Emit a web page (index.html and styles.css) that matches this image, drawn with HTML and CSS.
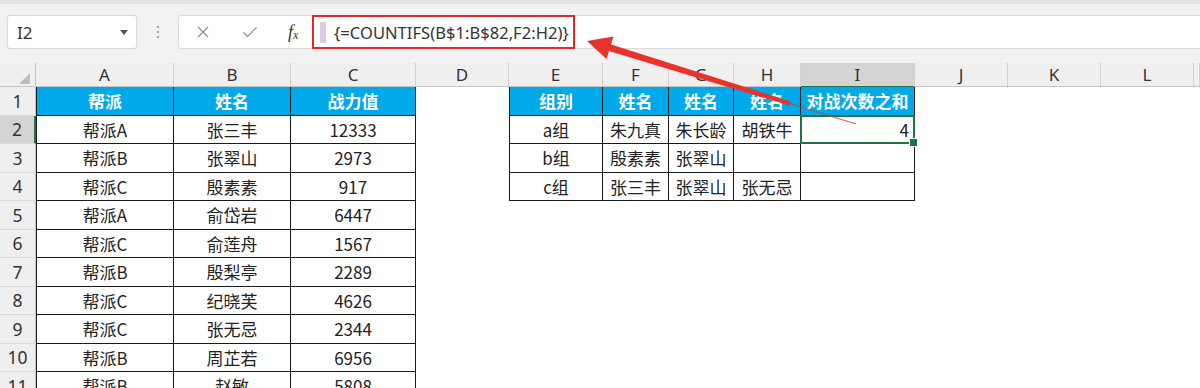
FILE: index.html
```html
<!DOCTYPE html>
<html lang="zh-CN">
<head>
    <meta charset="UTF-8">
    <title>COUNTIFS</title>
    <link rel="stylesheet" href="styles.css">
</head>
<body>
<div class="app">
    <div class="toolbar">
        <div class="name-box"><span>I2</span><span class="caret"></span></div>
        <div class="grip"><i></i><i></i><i></i></div>
        <div class="formula-bar">
            <span class="fb-btn">
                <svg width="14" height="14" viewBox="0 0 14 14"><path d="M2 2L12 12M12 2L2 12" stroke="#8c8c8c" stroke-width="1.2" fill="none"/></svg>
            </span>
            <span class="fb-btn">
                <svg width="16" height="14" viewBox="0 0 16 14"><path d="M1.5 7.5L5.5 11.5L14.5 2.5" stroke="#8c8c8c" stroke-width="1.2" fill="none"/></svg>
            </span>
            <span class="fb-fx"><i>f</i><sub>x</sub></span>
            <div class="formula-box">
                <span class="cursor-bar"></span>
                <span class="formula-text">{=COUNTIFS(B$1:B$82,F2:H2)}</span>
            </div>
        </div>
    </div>

    <div class="sheet">
        <div class="row col-heads">
            <div class="corner"><span class="tri"></span></div>
            <div class="ch">A</div><div class="ch">B</div><div class="ch">C</div><div class="ch">D</div>
            <div class="ch">E</div><div class="ch">F</div><div class="ch">G</div><div class="ch">H</div>
            <div class="ch active">I</div><div class="ch">J</div><div class="ch">K</div><div class="ch">L</div><div class="ch"></div>
        </div>

        <div class="row">
            <div class="rh">1</div>
            <div class="c t l hd">帮派</div><div class="c t hd">姓名</div><div class="c t hd">战力值</div>
            <div class="c"></div>
            <div class="c t l hd">组别</div><div class="c t hd">姓名</div><div class="c t hd">姓名</div><div class="c t hd">姓名</div><div class="c t hd">对战次数之和</div>
        </div>
        <div class="row">
            <div class="rh active">2</div>
            <div class="c t l">帮派A</div><div class="c t">张三丰</div><div class="c t">12333</div>
            <div class="c"></div>
            <div class="c t l">a组</div><div class="c t">朱九真</div><div class="c t">朱长龄</div><div class="c t">胡铁牛</div><div class="c t num sel">4</div>
        </div>
        <div class="row">
            <div class="rh">3</div>
            <div class="c t l">帮派B</div><div class="c t">张翠山</div><div class="c t">2973</div>
            <div class="c"></div>
            <div class="c t l">b组</div><div class="c t">殷素素</div><div class="c t">张翠山</div><div class="c t"></div><div class="c t"></div>
        </div>
        <div class="row">
            <div class="rh">4</div>
            <div class="c t l">帮派C</div><div class="c t">殷素素</div><div class="c t">917</div>
            <div class="c"></div>
            <div class="c t l">c组</div><div class="c t">张三丰</div><div class="c t">张翠山</div><div class="c t">张无忌</div><div class="c t"></div>
        </div>
        <div class="row">
            <div class="rh">5</div>
            <div class="c t l">帮派A</div><div class="c t">俞岱岩</div><div class="c t">6447</div>
        </div>
        <div class="row">
            <div class="rh">6</div>
            <div class="c t l">帮派C</div><div class="c t">俞莲舟</div><div class="c t">1567</div>
        </div>
        <div class="row">
            <div class="rh">7</div>
            <div class="c t l">帮派B</div><div class="c t">殷梨亭</div><div class="c t">2289</div>
        </div>
        <div class="row">
            <div class="rh">8</div>
            <div class="c t l">帮派C</div><div class="c t">纪晓芙</div><div class="c t">4626</div>
        </div>
        <div class="row">
            <div class="rh">9</div>
            <div class="c t l">帮派C</div><div class="c t">张无忌</div><div class="c t">2344</div>
        </div>
        <div class="row">
            <div class="rh">10</div>
            <div class="c t l">帮派B</div><div class="c t">周芷若</div><div class="c t">6956</div>
        </div>
        <div class="row">
            <div class="rh">11</div>
            <div class="c t l">帮派B</div><div class="c t">赵敏</div><div class="c t">5808</div>
        </div>
    </div>

    <!-- red annotation arrow pointing at the formula -->
    <svg class="arrow" width="1200" height="388" viewBox="0 0 1200 388">
        <polygon points="587,41 613.5,36.5 611,44.6 790.6,101.4 789.4,105.6 609,51 606.5,59" fill="#e8322c"/>
        <line x1="790" y1="103.5" x2="856" y2="124" stroke="#c8402f" stroke-width="1.2" stroke-opacity="0.8"/>
    </svg>
</div>
</body>
</html>
```

FILE: styles.css
```css
* {
    margin: 0;
    padding: 0;
    box-sizing: border-box;
}

body {
    width: 1200px;
    height: 388px;
    overflow: hidden;
    background-color: #ffffff;
    color: #222222;
    font-family: "Noto Sans", "Noto Sans CJK SC", sans-serif;
}

.app {
    position: relative;
    height: 388px;
}

/* Formula bar */
.toolbar {
    height: 63px;
    background-color: #f2f2f2;
    border-top: 4px solid #e3e3e3;
    display: flex;
    align-items: flex-start;
    padding: 11px 0 0 7px;
}

.name-box {
    width: 130px;
    height: 34px;
    background-color: #ffffff;
    border: 1px solid #dadada;
    border-radius: 3px;
    display: flex;
    align-items: center;
    padding-left: 9px;
    font-size: 17px;
    color: #333333;
}

.caret {
    margin-left: auto;
    margin-right: 8px;
    width: 0;
    height: 0;
    border-left: 4px solid transparent;
    border-right: 4px solid transparent;
    border-top: 5px solid #555555;
}

.grip {
    width: 41px;
    height: 34px;
    display: flex;
    flex-direction: column;
    align-items: center;
    justify-content: center;
    gap: 3px;
}

.grip i {
    width: 2px;
    height: 2px;
    background-color: #a8a8a8;
}

.formula-bar {
    flex: 1;
    height: 34px;
    background-color: #ffffff;
    border: 1px solid #dadada;
    border-right: none;
    border-radius: 3px 0 0 3px;
    display: flex;
    align-items: center;
}

.fb-btn {
    width: 47px;
    display: flex;
    justify-content: center;
}

.fb-fx {
    width: 39px;
    padding-left: 15px;
    font-family: "Liberation Serif", serif;
    font-size: 18px;
    color: #333333;
}

.fb-fx sub {
    font-size: 12px;
    font-style: italic;
    vertical-align: -1px;
}

.formula-box {
    align-self: stretch;
    margin: -1px 0;
    width: 263px;
    border: 2px solid #e3262b;
    display: flex;
    align-items: center;
    padding-left: 6px;
}

.cursor-bar {
    width: 6px;
    height: 21px;
    background-color: #dccbe0;
}

.formula-text {
    margin-left: 8px;
    font-size: 16.5px;
    letter-spacing: 0.05px;
    color: #333333;
    white-space: nowrap;
}

/* Sheet grid */
.row {
    display: grid;
    grid-template-columns: 36px 138px 117px 125px 93px 94px 66px 65px 67px 114px 93px 93px 93px 1fr;
    height: 28.5px;
}

.col-heads {
    height: 24px;
    background-color: #efefef;
    border-bottom: 1px solid #c6c6c6;
}

.corner {
    position: relative;
    border-right: 1px solid #c6c6c6;
}

.tri {
    position: absolute;
    right: 5px;
    bottom: 4px;
    width: 0;
    height: 0;
    border-left: 11px solid transparent;
    border-bottom: 11px solid #bdbdbd;
}

.ch {
    border-right: 1px solid #d2d2d2;
    text-align: center;
    font-size: 17px;
    line-height: 23px;
    color: #333333;
}

.ch.active {
    background-color: #d4d4d4;
    border-bottom: 2px solid #217346;
}

.rh {
    background-color: #efefef;
    border-right: 1px solid #c6c6c6;
    border-bottom: 1px solid #dadada;
    display: flex;
    align-items: center;
    justify-content: center;
    font-size: 17.5px;
    color: #333333;
}

.rh.active {
    background-color: #d4d4d4;
    border-right: 2px solid #217346;
}

.c {
    display: flex;
    align-items: center;
    justify-content: center;
    font-family: "Noto Sans CJK SC", sans-serif;
    font-size: 17px;
    white-space: nowrap;
}

.t {
    border-right: 1px solid #1a1a1a;
    border-bottom: 1px solid #1a1a1a;
}

.l {
    border-left: 1px solid #1a1a1a;
}

.hd {
    background-color: #00a9ea;
    color: #ffffff;
    font-weight: bold;
}

.num {
    justify-content: flex-end;
    padding-right: 5px;
}

/* active cell outline and fill handle */
.sel {
    position: relative;
}

.sel::after {
    content: "";
    position: absolute;
    top: -1px;
    left: -1px;
    right: -1px;
    bottom: -1px;
    border: 2px solid #217346;
}

.sel::before {
    content: "";
    position: absolute;
    right: -4px;
    bottom: -4px;
    width: 7px;
    height: 7px;
    background-color: #217346;
    border: 1px solid #ffffff;
    z-index: 1;
}

.arrow {
    position: absolute;
    top: 0;
    left: 0;
    pointer-events: none;
}
```
